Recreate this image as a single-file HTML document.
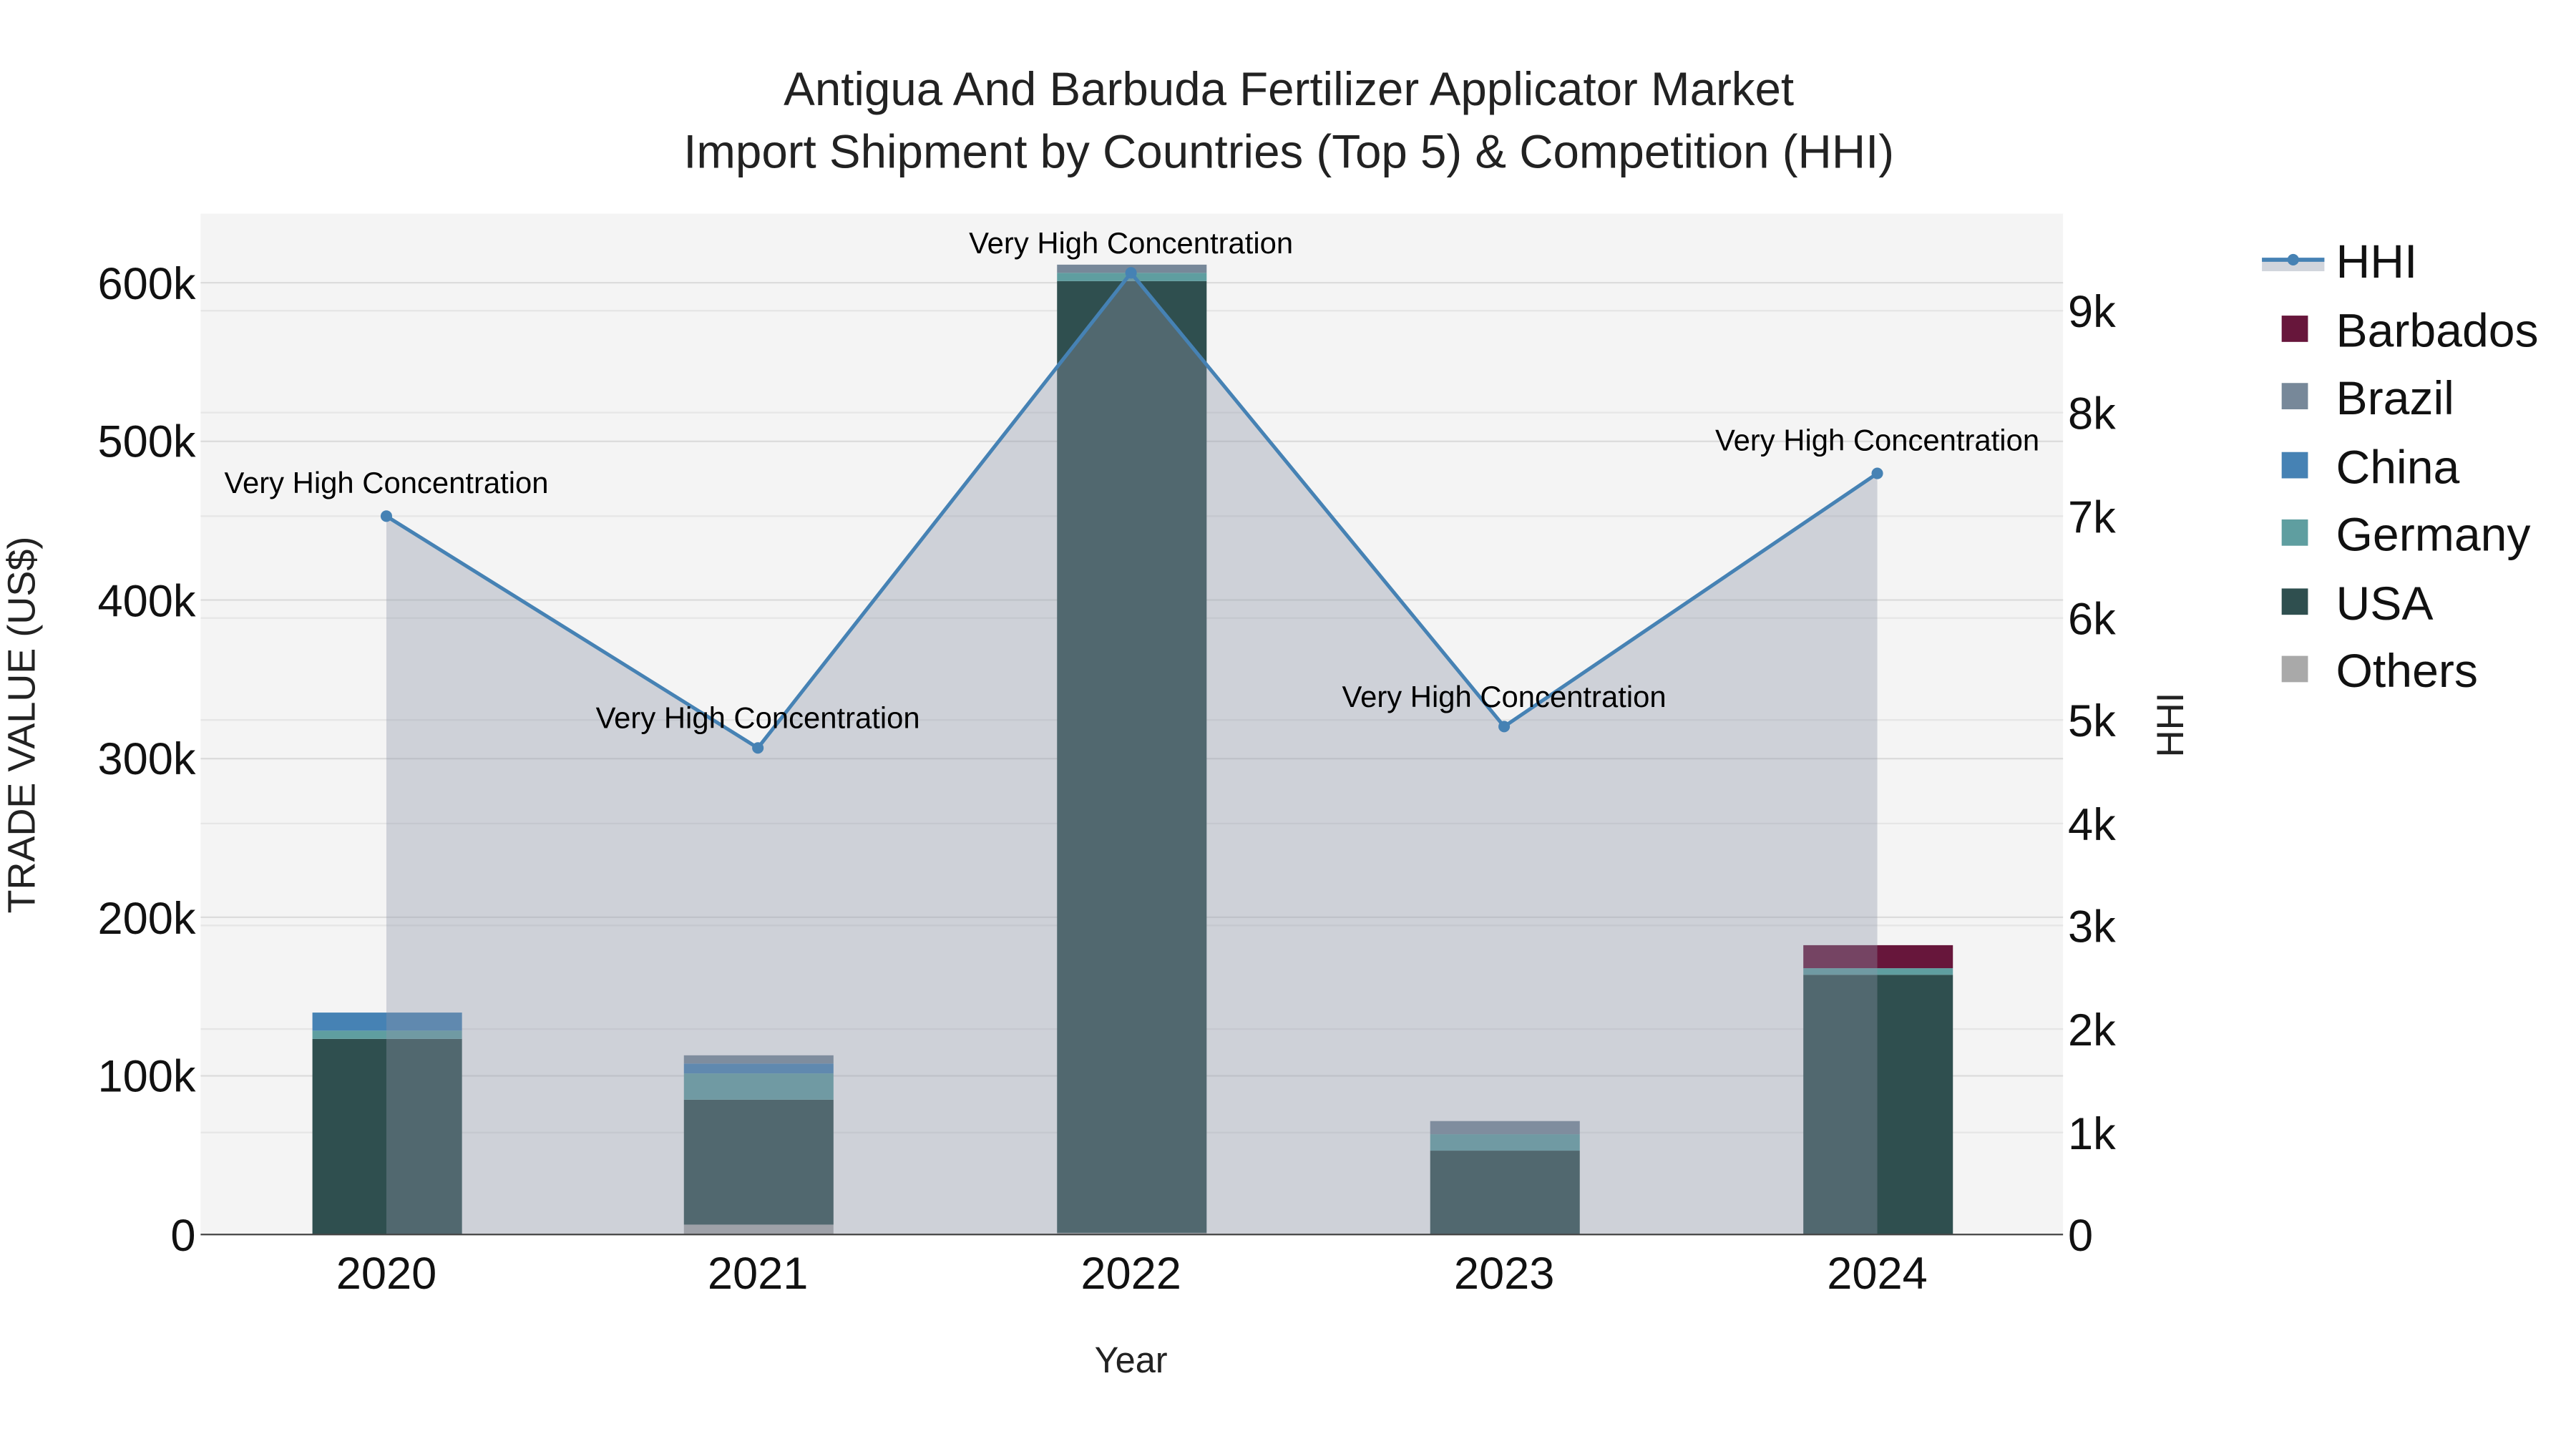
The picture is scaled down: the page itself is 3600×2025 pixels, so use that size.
<!DOCTYPE html>
<html><head><meta charset="utf-8"><style>html,body{margin:0;padding:0;background:#fff}svg{display:block}text{font-family:"Liberation Sans",sans-serif}</style></head><body>
<svg width="3600" height="2025" viewBox="0 0 1567 881.5" xmlns="http://www.w3.org/2000/svg">
<rect x="0" y="0" width="1567" height="881.5" fill="#fff"/>
<rect x="122" y="130" width="1133" height="621" fill="#f4f4f4"/>
<g stroke="#e6e6e6" stroke-width="1">
<line x1="122" x2="1255" y1="689" y2="689"/><line x1="122" x2="1255" y1="626" y2="626"/><line x1="122" x2="1255" y1="563" y2="563"/><line x1="122" x2="1255" y1="501" y2="501"/><line x1="122" x2="1255" y1="438" y2="438"/><line x1="122" x2="1255" y1="376" y2="376"/><line x1="122" x2="1255" y1="314" y2="314"/><line x1="122" x2="1255" y1="251" y2="251"/><line x1="122" x2="1255" y1="189" y2="189"/>
</g>
<g stroke="#dcdcdc" stroke-width="1">
<line x1="122" x2="1255" y1="654.5" y2="654.5"/><line x1="122" x2="1255" y1="558" y2="558"/><line x1="122" x2="1255" y1="461.5" y2="461.5"/><line x1="122" x2="1255" y1="365" y2="365"/><line x1="122" x2="1255" y1="268.5" y2="268.5"/><line x1="122" x2="1255" y1="172" y2="172"/>
</g>
<g>
<rect x="190" y="632" width="91" height="119" fill="#2f4f4f"/><rect x="190" y="627" width="91" height="5" fill="#5f9ea0"/><rect x="190" y="616" width="91" height="11" fill="#4682b4"/>
<rect x="416" y="745" width="91" height="6" fill="#a9a9a9"/><rect x="416" y="669" width="91" height="76" fill="#2f4f4f"/><rect x="416" y="653" width="91" height="16" fill="#5f9ea0"/><rect x="416" y="647" width="91" height="6" fill="#4682b4"/><rect x="416" y="642" width="91" height="5" fill="#778899"/>
<rect x="643" y="750" width="91" height="1" fill="#a9a9a9"/><rect x="643" y="171" width="91" height="579" fill="#2f4f4f"/><rect x="643" y="166" width="91" height="5" fill="#5f9ea0"/><rect x="643" y="161" width="91" height="5" fill="#778899"/>
<rect x="870" y="700" width="91" height="51" fill="#2f4f4f"/><rect x="870" y="690" width="91" height="10" fill="#5f9ea0"/><rect x="870" y="682" width="91" height="8" fill="#778899"/>
<rect x="1097" y="593" width="91" height="158" fill="#2f4f4f"/><rect x="1097" y="589" width="91" height="4" fill="#5f9ea0"/><rect x="1097" y="575" width="91" height="14" fill="#67163b"/>
</g>
<polygon points="235,751 235,314 461,455 688,166 915,442 1142,288 1142,751" fill="#8d96a8" fill-opacity="0.37"/>
<polyline points="235,314 461,455 688,166 915,442 1142,288" fill="none" stroke="#4682b4" stroke-width="2.2"/>
<g fill="#4682b4"><circle cx="235" cy="314" r="3.5"/><circle cx="461" cy="455" r="3.5"/><circle cx="688" cy="166" r="3.5"/><circle cx="915" cy="442" r="3.5"/><circle cx="1142" cy="288" r="3.5"/></g>
<line x1="122" x2="1255" y1="751" y2="751" stroke="#444" stroke-width="1"/>
<g font-size="18.2" text-anchor="middle" fill="#000">
<text x="235" y="300">Very High Concentration</text><text x="461" y="443">Very High Concentration</text><text x="688" y="154">Very High Concentration</text><text x="915" y="430">Very High Concentration</text><text x="1142" y="274">Very High Concentration</text>
</g>
<g font-size="27.5" text-anchor="end" fill="#111">
<text x="119" y="761">0</text><text x="119" y="664">100k</text><text x="119" y="568">200k</text><text x="119" y="471">300k</text><text x="119" y="375">400k</text><text x="119" y="278">500k</text><text x="119" y="182">600k</text>
</g>
<g font-size="27.5" text-anchor="start" fill="#111">
<text x="1258" y="761">0</text><text x="1258" y="699">1k</text><text x="1258" y="636">2k</text><text x="1258" y="573">3k</text><text x="1258" y="511">4k</text><text x="1258" y="448">5k</text><text x="1258" y="386">6k</text><text x="1258" y="324">7k</text><text x="1258" y="261">8k</text><text x="1258" y="199">9k</text>
</g>
<g font-size="27.5" text-anchor="middle" fill="#111">
<text x="235" y="784">2020</text><text x="461" y="784">2021</text><text x="688" y="784">2022</text><text x="915" y="784">2023</text><text x="1142" y="784">2024</text>
</g>
<text x="688" y="835" font-size="22" text-anchor="middle" fill="#222">Year</text>
<text transform="translate(21,441) rotate(-90)" font-size="23.5" text-anchor="middle" fill="#222">TRADE VALUE (US$)</text>
<text transform="translate(1328,441) rotate(-90)" font-size="23" text-anchor="middle" fill="#222">HHI</text>
<g font-size="28.5" text-anchor="middle" fill="#222">
<text x="784" y="64">Antigua And Barbuda Fertilizer Applicator Market</text>
<text x="784" y="102">Import Shipment by Countries (Top 5) &amp; Competition (HHI)</text>
</g>
<rect x="1376" y="157" width="38" height="8" fill="#8d96a8" fill-opacity="0.4"/>
<line x1="1376" x2="1414" y1="158" y2="158" stroke="#4682b4" stroke-width="2.5"/><circle cx="1395" cy="158" r="3.5" fill="#4682b4"/>
<g>
<rect x="1388" y="192" width="16" height="16" fill="#67163b"/><rect x="1388" y="233" width="16" height="16" fill="#778899"/><rect x="1388" y="275" width="16" height="16" fill="#4682b4"/><rect x="1388" y="316" width="16" height="16" fill="#5f9ea0"/><rect x="1388" y="358" width="16" height="16" fill="#2f4f4f"/><rect x="1388" y="399" width="16" height="16" fill="#a9a9a9"/>
</g>
<g font-size="28.8" fill="#111">
<text x="1421" y="169">HHI</text><text x="1421" y="211">Barbados</text><text x="1421" y="252">Brazil</text><text x="1421" y="294">China</text><text x="1421" y="335">Germany</text><text x="1421" y="377">USA</text><text x="1421" y="418">Others</text>
</g>
</svg>
</body></html>
